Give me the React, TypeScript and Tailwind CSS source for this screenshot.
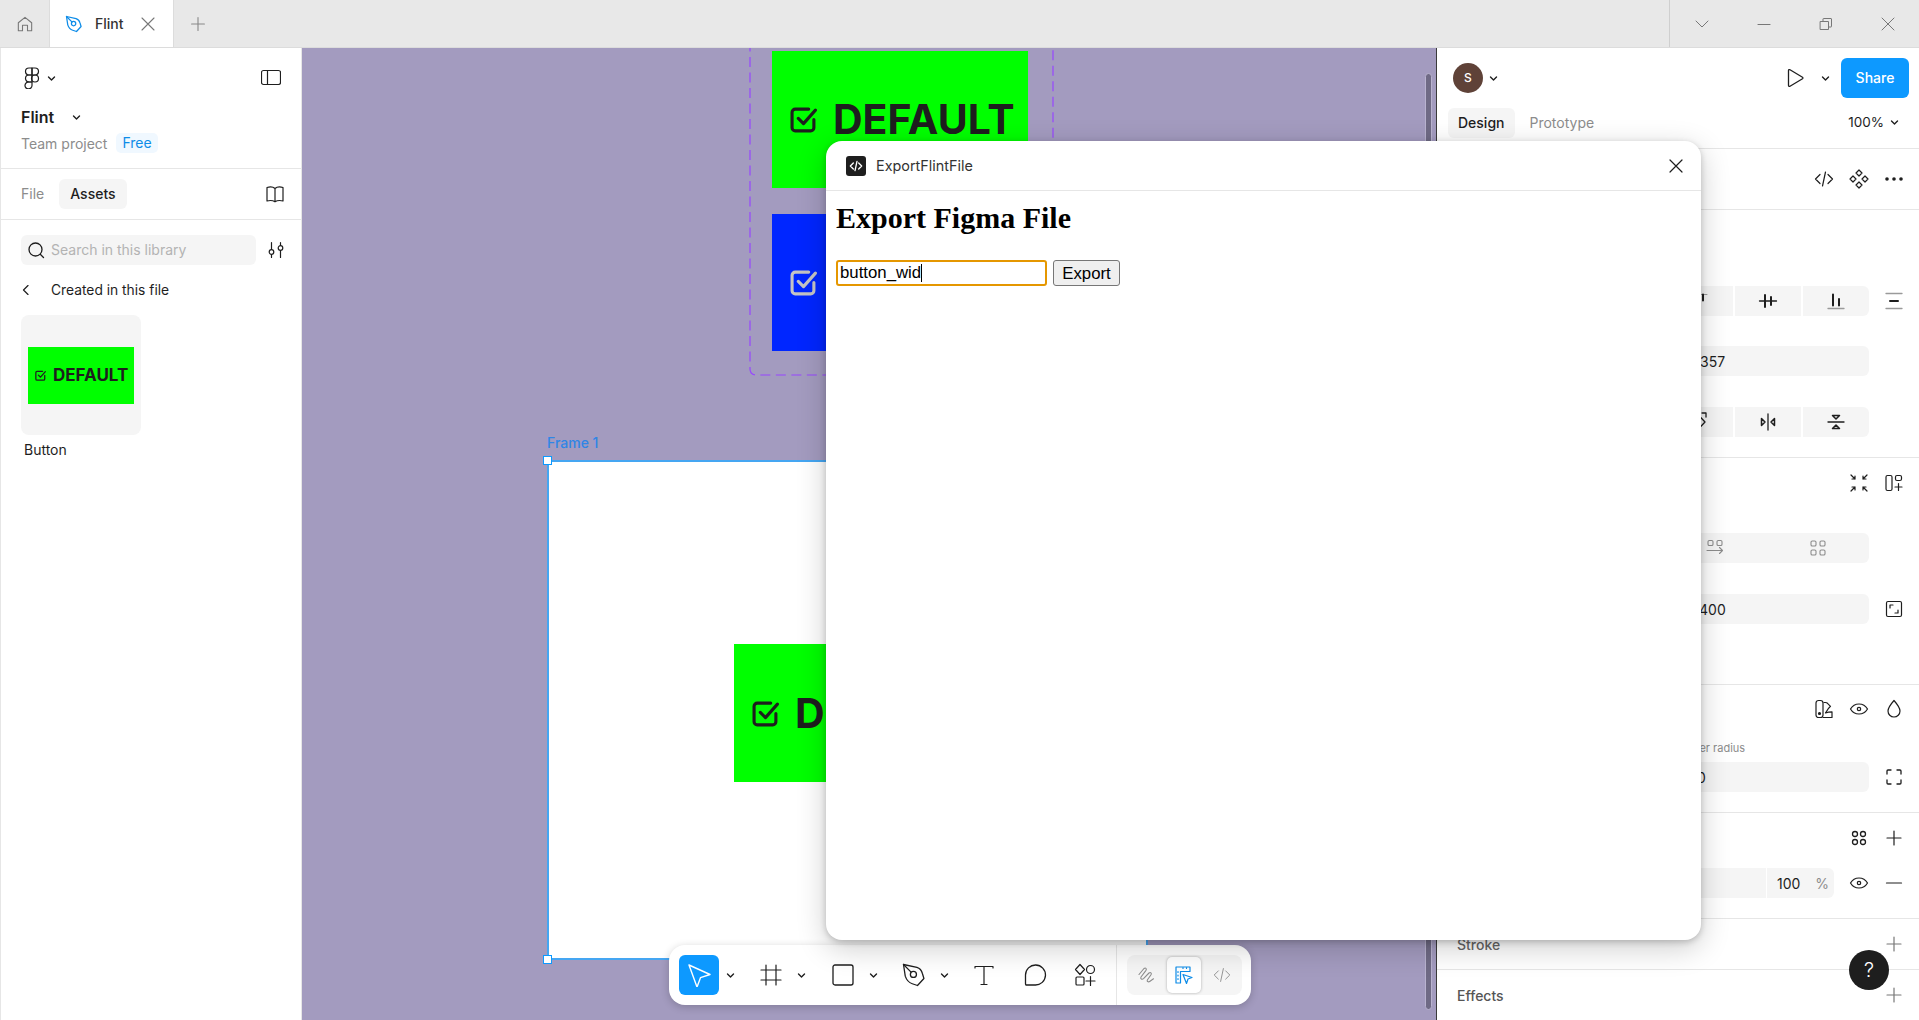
import React from "react";

type IconProps = { size?: number; box?: number; sw?: number; className?: string; children?: React.ReactNode };

function Ic({ size = 24, box = 24, sw = 1.3, className = "", children }: IconProps) {
  return (
    <svg
      width={size}
      height={size}
      viewBox={`0 0 ${box} ${box}`}
      fill="none"
      stroke="currentColor"
      strokeWidth={sw}
      strokeLinecap="round"
      strokeLinejoin="round"
      className={className}
    >
      {children}
    </svg>
  );
}

const Chevron = ({ className = "text-[#1e1e1e]" }: { className?: string }) => (
  <Ic size={9} box={9} sw={1.4} className={className}>
    <path d="M1.5 3l3 3 3-3" />
  </Ic>
);

const Nib = ({ size = 24, sw = 1.3, className = "" }: { size?: number; sw?: number; className?: string }) => (
  <Ic size={size} sw={sw} className={className}>
    <path d="M3 3l11.5 2.5c2.5.8 4 2.5 4.7 5.2l1.3 4.3-5.5 6-4.5-1.5c-3-1-5-3.5-6-6.5z" />
    <path d="M3 3l6.5 6.5" />
    <circle cx="11.5" cy="11.5" r="2.6" />
  </Ic>
);

const Plus = ({ size = 24, className = "text-[#1e1e1e]" }: { size?: number; className?: string }) => (
  <Ic size={size} sw={1.2} className={className}>
    <path d="M12 5v14M5 12h14" />
  </Ic>
);

const Eye = () => (
  <Ic sw={1.2}>
    <path d="M3.5 12c2-3.4 5-5 8.500-5s6.500 1.600 8.500 5c-2 3.400-5 5-8.500 5s-6.500-1.600-8.500-5z" />
    <circle cx="12" cy="12" r="1.700" />
  </Ic>
);

const FourDots = ({ className = "text-[#1e1e1e]", sw = 1.3 }: { className?: string; sw?: number }) => (
  <Ic sw={sw} className={className}>
    <circle cx="8" cy="8" r="2.500" />
    <circle cx="16" cy="8" r="2.500" />
    <circle cx="8" cy="16" r="2.500" />
    <circle cx="16" cy="16" r="2.500" />
  </Ic>
);

const CodeIcon = ({ size = 24, sw = 1.2, className = "" }: { size?: number; sw?: number; className?: string }) => (
  <Ic size={size} sw={sw} className={className}>
    <path d="M8 7.500L3.500 12 8 16.500M16 7.500l4.500 4.500-4.500 4.500M13.500 5l-3 14" />
  </Ic>
);

const CheckBox = ({ size, className }: { size: number; className: string }) => (
  <Ic size={size} box={26} sw={3} className={className}>
    <path d="M23 13v8a3 3 0 0 1-3 3H5a3 3 0 0 1-3-3V6a3 3 0 0 1 3-3h13" />
    <path d="M8 12l5 5L24.500 4" />
  </Ic>
);

function DefaultButton() {
  return (
    <div className="flex h-full w-full items-center gap-[16px] pl-[18px]">
      <CheckBox size={27} className="shrink-0 text-[#1e1e1e]" />
      <span className="text-[41px] leading-none font-bold whitespace-nowrap text-[#1e1e1e]">DEFAULT</span>
    </div>
  );
}

function TabBar() {
  return (
    <div className="flex h-[48px] shrink-0 border-b border-[#dcdcdc] bg-[#e8e8e8] text-[#777]">
      <div className="flex w-[49px] items-center justify-center">
        <Ic size={20} sw={1.3}>
          <path d="M4 10.500L12 4l8 6.500V20h-5v-6.500H9V20H4z" />
        </Ic>
      </div>
      <div className="flex w-[125px] items-center border-x border-[#dcdcdc] bg-white pl-[14px]">
        <Nib size={20} sw={1.5} className="text-[#0d8ce8]" />
        <span className="ml-[11px] text-[14px] font-medium text-[#333]">Flint</span>
        <Ic size={14} box={14} sw={1.1} className="ml-[17px]">
          <path d="M1 1l12 12M13 1L1 13" />
        </Ic>
      </div>
      <div className="flex w-[48px] items-center justify-center">
        <Plus size={22} className="text-[#888]" />
      </div>
      <div className="flex-1" />
      <div className="flex w-[250px] border-l border-[#cfcfcf] pl-[1px]">
        <div className="flex flex-1 items-center justify-center">
          <Ic size={14} box={14} sw={1}>
            <path d="M1 4l6 6 6-6" />
          </Ic>
        </div>
        <div className="flex flex-1 items-center justify-center">
          <Ic size={14} box={14} sw={1.1}>
            <path d="M1 7.500h12" />
          </Ic>
        </div>
        <div className="flex flex-1 items-center justify-center">
          <Ic size={14} box={14} sw={1}>
            <path d="M1.500 4.500h8v8h-8zM4 4.500V2a.5.5 0 0 1 .5-.5h7.500a.5.5 0 0 1 .5.5v7.500a.5.5 0 0 1-.5.5h-2.500" />
          </Ic>
        </div>
        <div className="flex flex-1 items-center justify-center">
          <Ic size={14} box={14} sw={1}>
            <path d="M1 1l12 12M13 1L1 13" />
          </Ic>
        </div>
      </div>
    </div>
  );
}

function LeftPanel() {
  return (
    <aside className="flex w-[302px] shrink-0 flex-col border-x border-[#e6e6e6] bg-white text-[14px] text-[#1e1e1e]">
      <div className="h-[121px] shrink-0 border-b border-[#e6e6e6] pr-[20px] pl-[20px]">
        <div className="mt-[18px] flex h-[24px] items-center justify-between">
          <div className="flex items-center">
            <Ic size={22} box={22} sw={1.2} className="ml-[1px]">
              <path d="M10 1H7a3.500 3.500 0 0 0 0 7h3z" />
              <path d="M10 1h3a3.500 3.500 0 0 1 0 7h-3z" />
              <path d="M10 8H7a3.500 3.500 0 0 0 0 7h3z" />
              <circle cx="13" cy="11.500" r="3.500" />
              <path d="M10 15H7a3.500 3.500 0 1 0 3 3.500z" />
            </Ic>
            <Chevron className="ml-[3px] text-[#1e1e1e]" />
          </div>
          <Ic size={20} box={20} sw={1.2}>
            <rect x="0.500" y="2.500" width="19" height="14" rx="2" />
            <path d="M6.500 2.500v14" />
          </Ic>
        </div>
        <div className="mt-[15px] flex h-[24px] items-center">
          <span className="text-[16px] font-semibold">Flint</span>
          <Chevron className="ml-[18px] text-[#1e1e1e]" />
        </div>
        <div className="mt-[4px] flex h-[20px] items-center">
          <span className="text-[14px] text-[#8c8c8c]">Team project</span>
          <span className="ml-[9px] rounded-[5px] bg-[#f0f8ff] px-[6px] py-[1px] text-[14px] leading-[18px] text-[#0d8ce8]">Free</span>
        </div>
      </div>

      <div className="flex h-[51px] shrink-0 items-center border-b border-[#e6e6e6] pr-[16px] pb-[1px] pl-[20px]">
        <span className="text-[#8c8c8c]">File</span>
        <span className="ml-[15px] flex h-[30px] items-center rounded-[6px] bg-[#f5f5f5] px-[11px] font-medium">Assets</span>
        <Ic size={20} box={20} sw={1.2} className="ml-auto">
          <path d="M2 3.500c3-1 6-.8 8 1 2-1.800 5-2 8-1V17c-3-.8-6-.5-8 .8-2-1.300-5-1.600-8-.8zM10 4.500v13" />
        </Ic>
      </div>

      <div className="mt-[15px] flex items-center pr-[16px] pl-[20px]">
        <div className="flex h-[30px] w-[235px] items-center rounded-[6px] bg-[#f5f5f5] pb-[1px] pl-[6px]">
          <Ic size={18} box={18} sw={1.3}>
            <circle cx="8.500" cy="8.500" r="6.500" />
            <path d="M13.500 13.500l3 3" />
          </Ic>
          <span className="ml-[6px] text-[#b3b3b3]">Search in this library</span>
        </div>
        <Ic size={18} box={18} sw={1.2} className="ml-auto">
          <path d="M4.500 1.500v7M4.500 13.500v3M13.500 1.500v3M13.500 9.500v7" />
          <circle cx="4.500" cy="11" r="2.300" />
          <circle cx="13.500" cy="7" r="2.300" />
        </Ic>
      </div>

      <div className="mt-[13px] flex h-[24px] items-center pl-[20px]">
        <Ic size={10} box={10} sw={1.2}>
          <path d="M7 0.500L2.500 5 7 9.500" />
        </Ic>
        <span className="ml-[20px] text-[13.8px]">Created in this file</span>
      </div>

      <div className="mt-[13px] ml-[20px] flex h-[120px] w-[120px] items-center justify-center rounded-[8px] bg-[#f5f5f5]">
        <div className="flex h-[57px] w-[106px] items-center gap-[7px] bg-[#00ff00] pl-[7px]">
          <CheckBox size={11} className="shrink-0 text-[#1e1e1e]" />
          <span className="text-[17px] leading-none font-bold text-[#1e1e1e]">DEFAULT</span>
        </div>
      </div>
      <div className="mt-[5px] ml-[23px] leading-[20px] text-[#1e1e1e]">Button</div>
    </aside>
  );
}

function Toolbar() {
  return (
    <div className="absolute top-[897px] left-[367px] flex h-[60px] w-[582px] items-center rounded-[16px] bg-white pl-[10px] text-[#1e1e1e] shadow-[0_2px_8px_rgba(0,0,0,0.2)]">
      <div className="flex h-[40px] w-[40px] items-center justify-center rounded-[6px] bg-[#0d99ff] text-white">
        <Ic size={24} sw={1.4}>
          <path d="M2 2l21 9.500-9.500 3.200-3.500 9.300z" />
        </Ic>
      </div>
      <Chevron className="ml-[7px]" />
      <Ic size={24} sw={1.2} className="ml-[24px]">
        <path d="M2 7h20M2 17h20M7 2v20M17 2v20" />
      </Ic>
      <Chevron className="ml-[14px]" />
      <Ic size={24} sw={1.3} className="ml-[25px]">
        <rect x="2" y="2" width="20" height="20" rx="2" />
      </Ic>
      <Chevron className="ml-[14px]" />
      <Nib size={28} sw={1.1} className="ml-[22px]" />
      <Chevron className="ml-[12px]" />
      <Ic size={24} sw={1.2} className="ml-[23px]">
        <path d="M3 5V3.500h18V5M12 3.500V21.500M9 21.500h6" />
      </Ic>
      <Ic size={24} sw={1.3} className="ml-[27px]">
        <path d="M3 22H12a10 10 0 1 0-9.500-10v8.500a2 2 0 0 0 .5 1.500z" />
      </Ic>
      <Ic size={24} sw={1.2} className="ml-[26px]">
        <path d="M7 1.500l4.500 5-4.500 5-4.500-5z" />
        <circle cx="17.500" cy="6.500" r="4" />
        <rect x="3" y="14" width="8" height="8" rx="1" />
        <path d="M17.500 13.500v9M13 18h9" />
      </Ic>
      <div className="ml-[19px] flex h-[60px] items-center border-l border-[#e6e6e6] pl-[10px]">
        <div className="flex h-[40px] w-[115px] items-center rounded-[8px] bg-[#f5f5f5]">
          <div className="flex w-[40px] justify-center text-[#8c8c8c]">
            <Ic size={20} box={20} sw={1.1}>
              <path d="M2 9.500l5-6c1.500-1.300 3 .2 2 1.800L4 12c-1 1.600 1 3 2.500 1.600L12 8c1.500-1.300 3 .2 2 1.800l-3.500 5c-1 1.600.8 2.700 2.500 1.500l3.500-2.500" />
            </Ic>
          </div>
          <div className="flex h-[36px] w-[34px] items-center justify-center rounded-[5px] bg-white text-[#0d8ce8] shadow-[0_0_3px_rgba(0,0,0,0.3)]">
            <Ic size={22} box={22} sw={1.2}>
              <path d="M3 3h14v4.500H7.500V19H3z" />
              <path d="M5 7.500v1M5 11v1M5 14.500v1M10 3.500v1M13.500 3.500v1" />
              <path d="M10 10.500l9 3-4 1.500-1.500 4.500z" />
            </Ic>
          </div>
          <div className="flex flex-1 justify-center text-[#8c8c8c]">
            <CodeIcon size={22} sw={1} />
          </div>
        </div>
      </div>
    </div>
  );
}

function Canvas() {
  return (
    <main className="relative flex-1 overflow-hidden border-r border-[#3a3a3a] bg-[#a39bbf]">
      <svg className="absolute top-[-50px] left-[447px]" width="305" height="379" fill="none">
        <rect x="1" y="-10" width="303" height="387" rx="6" stroke="#9747ff" strokeWidth="1.200" strokeDasharray="10 5.500" />
      </svg>
      <div className="absolute top-[3px] left-[470px] h-[137px] w-[256px] bg-[#00ff00]">
        <DefaultButton />
      </div>
      <div className="absolute top-[166px] left-[470px] flex h-[137px] w-[256px] items-center bg-[#0026ff] pl-[18px]">
        <CheckBox size={27} className="text-[#c4c4c4]" />
      </div>

      <div className="absolute top-[386px] left-[245px] text-[14px] leading-[18px] font-medium text-[#2f86e6]">Frame 1</div>
      <div className="absolute top-[412px] left-[245px] h-[500px] w-[601px] border-2 border-[#45a6f2] bg-white">
        <div className="absolute top-[182px] left-[185px] h-[138px] w-[256px] bg-[#00ff00]">
          <DefaultButton />
        </div>
        <div className="absolute top-[-6px] left-[-6px] h-[9px] w-[9px] border border-[#0d99ff] bg-white" />
        <div className="absolute bottom-[-6px] left-[-6px] h-[9px] w-[9px] border border-[#0d99ff] bg-white" />
      </div>

      <div className="absolute top-[25px] right-[4px] bottom-[10px] w-[7px] rounded-full border border-[#b9b3cf] bg-[#6f6a85]" />
      <Toolbar />
    </main>
  );
}

function RightIcons({ children }: { children: React.ReactNode }) {
  return <div className="flex items-center justify-end pr-[8px] text-[#1e1e1e] [&>*]:flex [&>*]:w-[35px] [&>*]:justify-center">{children}</div>;
}

function Gutter({ children }: { children?: React.ReactNode }) {
  return <div className="flex w-[50px] shrink-0 justify-center text-[#1e1e1e]">{children}</div>;
}

function RightPanel() {
  return (
    <aside className="flex w-[482px] shrink-0 flex-col bg-white text-[14px] text-[#1e1e1e]">
      <div className="h-[101px] shrink-0 border-b border-[#e6e6e6]">
        <div className="flex h-[60px] items-center pr-[10px] pl-[16px]">
          <div className="flex h-[30px] w-[30px] items-center justify-center rounded-full bg-[#5f4238] text-[12px] font-medium text-white">S</div>
          <Chevron className="ml-[6px]" />
          <Ic size={24} sw={1.3} className="ml-auto">
            <path d="M5.500 4.500v15a1 1 0 0 0 1.500.8l12.500-7.500a1 1 0 0 0 0-1.600L7 3.700a1 1 0 0 0-1.500.8z" />
          </Ic>
          <Chevron className="mr-[11px] ml-[14px]" />
          <div className="flex h-[40px] w-[68px] items-center justify-center rounded-[6px] bg-[#0d99ff] pb-[1px] font-medium text-white">Share</div>
        </div>
        <div className="flex h-[30px] items-center pr-[20px] pb-[1px] pl-[11px]">
          <div className="flex h-[30px] items-center rounded-[6px] bg-[#f5f5f5] px-[10px] font-medium">Design</div>
          <span className="ml-[15px] text-[#8c8c8c]">Prototype</span>
          <span className="ml-auto text-[13.5px]">100%</span>
          <Chevron className="ml-[6px]" />
        </div>
      </div>

      <div className="flex h-[61px] shrink-0 items-center justify-end border-b border-[#e6e6e6]">
        <RightIcons>
          <span><CodeIcon /></span>
          <span>
            <Ic sw={1.2}>
              <path d="M12 3l3 3-3 3-3-3zM12 15l3 3-3 3-3-3zM6 9l3 3-3 3-3-3zM18 9l3 3-3 3-3-3z" />
            </Ic>
          </span>
          <span>
            <Ic sw={0}>
              <circle cx="5" cy="12" r="1.800" fill="currentColor" />
              <circle cx="12" cy="12" r="1.800" fill="currentColor" />
              <circle cx="19" cy="12" r="1.800" fill="currentColor" />
            </Ic>
          </span>
        </RightIcons>
      </div>

      {/* position and size */}
      <div className="h-[248px] shrink-0 border-b border-[#e6e6e6] pt-[76px] pl-[12px]">
        <div className="flex h-[30px] items-center">
          <div className="flex h-full flex-1 gap-[2px] overflow-hidden rounded-[6px]">
            <div className="flex flex-1 items-center justify-end bg-[#f5f5f5] pr-[21px]">
              <Ic>
                <path d="M5 5.500h14" stroke="#9a9a9a" strokeWidth={1} />
                <path d="M9 5.500v9M15 5.500v6" strokeWidth={2} />
              </Ic>
            </div>
            <div className="flex w-[66px] items-center justify-center bg-[#f5f5f5]">
              <Ic>
                <path d="M3.500 12h17" />
                <path d="M9 6v12M15 8v8" strokeWidth={2} />
              </Ic>
            </div>
            <div className="flex w-[66px] items-center justify-center bg-[#f5f5f5]">
              <Ic>
                <path d="M4 19.500h16" stroke="#9a9a9a" />
                <path d="M9 5.500v11M15 10v6.500" strokeWidth={2} />
              </Ic>
            </div>
          </div>
          <Gutter>
            <Ic>
              <path d="M4 4.500h16M4 19.500h16" stroke="#9a9a9a" />
              <path d="M8 12h8" strokeWidth={2} />
            </Ic>
          </Gutter>
        </div>
        <div className="mt-[30px] flex h-[30px] items-center">
          <div className="flex h-full flex-1 items-center rounded-[6px] bg-[#f5f5f5] pl-[251px]">357</div>
          <Gutter />
        </div>
        <div className="mt-[31px] flex h-[30px] items-center">
          <div className="flex h-full flex-1 gap-[2px] overflow-hidden rounded-[6px]">
            <div className="flex flex-1 items-center justify-end bg-[#f5f5f5] pr-[19px]">
              <Ic>
                <path d="M7 3.500l8 8.500-8 8.500M12 3h4v4" />
              </Ic>
            </div>
            <div className="flex w-[66px] items-center justify-center bg-[#f5f5f5]">
              <Ic>
                <path d="M12 4v16" />
                <path d="M5.500 8.500v7l3.500-3.500zM18.500 8.500v7L15 12z" strokeWidth={1.5} />
              </Ic>
            </div>
            <div className="flex w-[66px] items-center justify-center bg-[#f5f5f5]">
              <Ic>
                <path d="M4 12h16" />
                <path d="M8.500 5.500h7L12 9zM8.500 18.500h7L12 15z" strokeWidth={1.5} />
              </Ic>
            </div>
          </div>
          <Gutter />
        </div>
      </div>

      {/* auto layout */}
      <div className="h-[227px] shrink-0 border-b border-[#e6e6e6] pt-[13px] pl-[12px]">
        <RightIcons>
          <span>
            <Ic sw={1.2}>
              <path d="M4 4l4 4M8 5v3H5M20 4l-4 4M16 5v3h3M4 20l4-4M5 16h3v3M20 20l-4-4M19 16h-3v3" />
            </Ic>
          </span>
          <span>
            <Ic sw={1.2}>
              <rect x="4" y="4.500" width="6" height="15" rx="1.500" />
              <rect x="13.500" y="4.500" width="6" height="5" rx="1.500" />
              <path d="M16.500 12.500v7M13 16h7" />
            </Ic>
          </span>
        </RightIcons>
        <div className="mt-[38px] flex h-[30px] items-center">
          <div className="flex h-full flex-1 items-center justify-end rounded-[6px] bg-[#f5f5f5] text-[#8c8c8c]">
            <div className="flex w-[103px] justify-center">
              <Ic sw={1.1}>
                <rect x="5" y="4.500" width="5" height="5" rx="1.300" />
                <rect x="14" y="4.500" width="5" height="5" rx="1.300" />
                <path d="M4 14.500h15.500M16.500 11.500l3 3-3 3" />
              </Ic>
            </div>
            <div className="flex w-[103px] justify-center">
              <Ic sw={1.1}>
                <rect x="5" y="5" width="5" height="5" rx="1.300" />
                <rect x="14" y="5" width="5" height="5" rx="1.300" />
                <rect x="5" y="14" width="5" height="5" rx="1.300" />
                <rect x="14" y="14" width="5" height="5" rx="1.300" />
              </Ic>
            </div>
          </div>
          <Gutter />
        </div>
        <div className="mt-[31px] flex h-[30px] items-center">
          <div className="flex h-full flex-1 items-center rounded-[6px] bg-[#f5f5f5] pl-[250px]">400</div>
          <Gutter>
            <Ic sw={1.2}>
              <rect x="4.500" y="4.500" width="15" height="15" rx="1.500" />
              <path d="M8 11V8h3M16 13v3h-3" />
            </Ic>
          </Gutter>
        </div>
      </div>

      {/* appearance */}
      <div className="h-[128px] shrink-0 border-b border-[#e6e6e6] pt-[12px] pl-[12px]">
        <RightIcons>
          <span>
            <Ic sw={1.2}>
              <rect x="4" y="3.500" width="7" height="17" rx="2.500" />
              <circle cx="7.500" cy="16.500" r="1" fill="currentColor" />
              <path d="M12 5.500h1.500a3 3 0 0 1 2 .8l3 3c-1.500 1.200-3.500 4-5 6.700 2-.8 4-1.200 6.500-1.200v5.700H11" />
            </Ic>
          </span>
          <span><Eye /></span>
          <span>
            <Ic sw={1.2}>
              <path d="M12 3.500c3.500 4 6 7 6 10.500a6 6 0 0 1-12 0c0-3.500 2.500-6.500 6-10.500z" />
            </Ic>
          </span>
        </RightIcons>
        <div className="mt-[19px] flex h-[16px] items-center pl-[225px] text-[11px] text-[#8c8c8c]">Corner radius</div>
        <div className="mt-[6px] flex h-[30px] items-center">
          <div className="flex h-full flex-1 items-center rounded-[6px] bg-[#f5f5f5] pl-[248px]">0</div>
          <Gutter>
            <Ic sw={1.3}>
              <path d="M5 9V6a1 1 0 0 1 1-1h3M15 5h3a1 1 0 0 1 1 1v3M19 15v3a1 1 0 0 1-1 1h-3M9 19H6a1 1 0 0 1-1-1v-3" />
            </Ic>
          </Gutter>
        </div>
      </div>

      {/* fill */}
      <div className="h-[106px] shrink-0 border-b border-[#e6e6e6] pt-[13px] pl-[12px]">
        <RightIcons>
          <span><FourDots /></span>
          <span><Plus /></span>
        </RightIcons>
        <div className="mt-[18px] flex h-[30px] items-center">
          <div className="mr-[7px] flex h-full flex-1 gap-[1px] overflow-hidden rounded-[6px]">
            <div className="flex-1 bg-[#f5f5f5]" />
            <div className="flex w-[67px] items-center bg-[#f5f5f5] pl-[10px]">
              <span>100</span>
              <span className="ml-[15px] text-[#8c8c8c]">%</span>
            </div>
          </div>
          <RightIcons>
            <span><Eye /></span>
            <span>
              <Ic sw={1.2}>
                <path d="M4.500 12h15" />
              </Ic>
            </span>
          </RightIcons>
        </div>
      </div>

      <div className="flex h-[51px] shrink-0 items-center justify-between border-b border-[#e6e6e6] pl-[20px]">
        <span className="font-medium text-[#666]">Stroke</span>
        <RightIcons>
          <span><Plus className="text-[#777]" /></span>
        </RightIcons>
      </div>
      <div className="flex h-[50px] shrink-0 items-center justify-between pl-[20px]">
        <span className="font-medium text-[#555]">Effects</span>
        <RightIcons>
          <span><Plus className="text-[#777]" /></span>
        </RightIcons>
      </div>
    </aside>
  );
}

function PluginWindow() {
  return (
    <div className="absolute top-[141px] left-[826px] flex h-[799px] w-[875px] flex-col rounded-[16px] bg-white shadow-[0_2px_6px_rgba(0,0,0,0.2),0_8px_30px_rgba(0,0,0,0.2)]">
      <div className="flex h-[50px] shrink-0 items-center border-b border-[#e6e6e6] pr-[18px] pl-[20px] font-['Inter',sans-serif]">
        <div className="flex h-[20px] w-[20px] items-center justify-center rounded-[3px] bg-[#1e1e1e] text-white">
          <CodeIcon size={16} sw={2} />
        </div>
        <span className="ml-[10px] text-[14.4px] text-[#333]">ExportFlintFile</span>
        <Ic size={14} box={14} sw={1.2} className="ml-auto text-[#1e1e1e]">
          <path d="M1 1l12 12M13 1L1 13" />
        </Ic>
      </div>
      <div className="px-[8px] font-['Liberation_Serif',serif] text-black">
        <h1 className="mt-[8px] ml-[2px] text-[30px] leading-[37px] font-bold">Export Figma File</h1>
        <div className="relative mt-[24px] flex items-center gap-[6px] pl-[2px] font-['Liberation_Sans',sans-serif] text-[16.8px]">
          <input
            readOnly
            value="button_wid"
            className="h-[26px] w-[211px] rounded-[3px] border-2 border-[#e59700] px-[2px] text-black outline-none"
          />
          <div className="absolute top-[4px] left-[87px] h-[18px] w-px bg-black" />
          <button className="h-[26px] w-[67px] rounded-[3px] border border-[#767676] bg-[#efefef] pb-[1px] text-black">Export</button>
        </div>
      </div>
    </div>
  );
}

export default function App() {
  return (
    <div className="relative flex h-[1020px] w-[1919px] flex-col overflow-hidden bg-white font-['Inter',sans-serif]">
      <TabBar />
      <div className="flex min-h-0 flex-1">
        <LeftPanel />
        <Canvas />
        <RightPanel />
      </div>
      <PluginWindow />
      <div className="absolute top-[950px] left-[1849px] flex h-[40px] w-[40px] items-center justify-center rounded-full bg-[#1e1e1e] text-[20px] font-light text-white">?</div>
    </div>
  );
}
